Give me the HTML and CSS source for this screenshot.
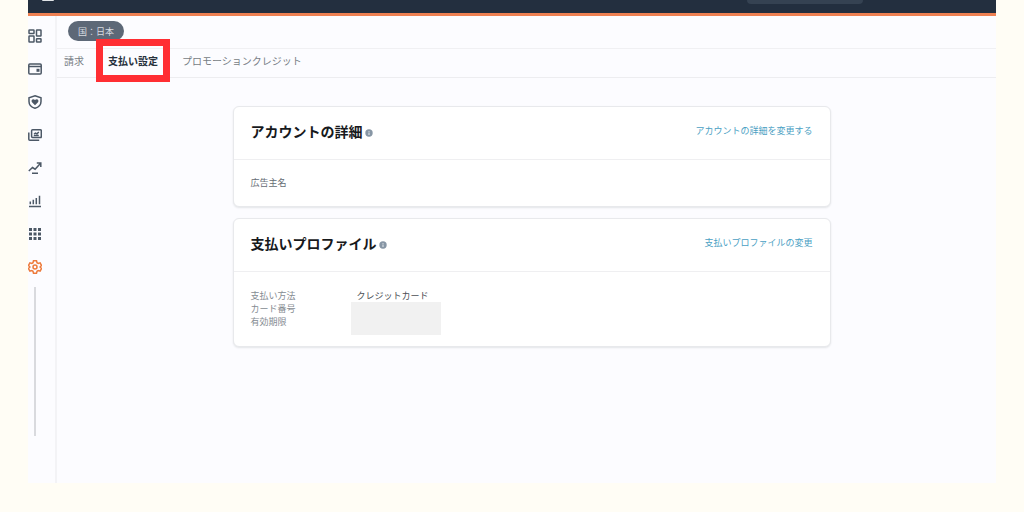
FILE: index.html
```html
<!DOCTYPE html>
<html lang="ja">
<head>
<meta charset="utf-8">
<meta name="viewport" content="width=device-width, initial-scale=1">
<title>支払い設定</title>
<link rel="stylesheet" href="styles.css">
</head>
<body>
<div class="app">
  <header class="topbar">
    <span class="logo"></span>
    <span class="search"></span>
  </header>
  <div class="workspace">
    <nav class="sidebar" aria-label="メニュー">
      <a class="nav-item" href="#" aria-label="ダッシュボード"><svg viewBox="0 0 14 14"><rect x="1" y="1" width="5" height="3.5" rx=".5"/><rect x="1" y="7" width="5" height="6" rx=".5"/><rect x="8.5" y="1" width="4.5" height="6" rx=".5"/><rect x="8.5" y="9.7" width="4.5" height="3.3" rx=".5"/></svg></a>
      <a class="nav-item" href="#" aria-label="支払い"><svg viewBox="0 0 14 14"><rect x=".8" y="2" width="12.4" height="10" rx="1"/><path d="M1 4.500h12"/><rect class="fill" x="8.5" y="6.800" width="3" height="3"/></svg></a>
      <a class="nav-item" href="#" aria-label="ブランド保護"><svg viewBox="0 0 14 14"><path d="M7 .8 13 2.700V6.400C13 10 10.400 12.200 7 13.300 3.600 12.200 1 10 1 6.400V2.700Z"/><path class="fill" d="M7 10.300 4 7.200C2.500 5.300 4.800 2.900 7 4.900 9.200 2.900 11.500 5.300 10 7.200Z"/></svg></a>
      <a class="nav-item" href="#" aria-label="クリエイティブ"><svg viewBox="0 0 14 14"><rect x="3.600" y="1.800" width="9.700" height="7.800" rx="1"/><path d="M.8 4.500v6.700q0 1 1 1h9.400M5.800 7.500h5M6 6l1.500-1 1.500.8 1.800-1.800"/></svg></a>
      <a class="nav-item" href="#" aria-label="トレンド"><svg viewBox="0 0 14 14"><path d="M.8 10 4.500 6.500l2.600 1.700 5.200-5.600M8.800 2h4v4M4 12.300h6"/></svg></a>
      <a class="nav-item" href="#" aria-label="レポート"><svg viewBox="0 0 14 14"><path d="M1 12.500h12M2.300 10.300V7.500M5.300 10.300V5.800M8.300 10.300V4M11.500 10.300V1.800"/></svg></a>
      <a class="nav-item" href="#" aria-label="アプリ"><svg viewBox="0 0 14 14"><path class="fill" d="M1 1h3v3H1ZM5.500 1h3v3h-3ZM10 1h3v3h-3ZM1 5.500h3v3H1ZM5.500 5.500h3v3h-3ZM10 5.500h3v3h-3ZM1 10h3v3H1ZM5.500 10h3v3h-3ZM10 10h3v3h-3Z"/></svg></a>
      <a class="nav-item nav-item-active" href="#" aria-label="設定"><svg viewBox="0 0 14 14"><path d="M5.500.8h3L9 2.700l1.200.7 1.900-.6 1.400 2.600L12.100 7l1.400 1.600-1.400 2.600-1.900-.6-1.200.7-.5 1.900h-3L5 11.300l-1.200-.7-1.900.6L.5 8.600 1.900 7 .5 5.400l1.400-2.600 1.900.6L5 2.700Z"/><circle cx="7" cy="7" r="2"/></svg></a>
      <span class="rail"></span>
    </nav>
    <main class="main">
      <div class="filters"><button class="country" type="button">国：日本</button></div>
      <nav class="tabs" aria-label="設定">
        <a class="tab" href="#">請求</a>
        <a class="tab tab-active" href="#" aria-current="page">支払い設定</a>
        <a class="tab" href="#">プロモーションクレジット</a>
      </nav>
      <div class="content">
        <section class="card">
          <div class="card-head">
            <h2>アカウントの詳細</h2>
            <svg class="info" viewBox="0 0 8 8"><circle cx="4" cy="4" r="3.700"/><path d="M4 3.500v2.500M4 2v.8"/></svg>
            <a class="action" href="#">アカウントの詳細を変更する</a>
          </div>
          <div class="card-body">広告主名</div>
        </section>
        <section class="card">
          <div class="card-head">
            <h2>支払いプロファイル</h2>
            <svg class="info" viewBox="0 0 8 8"><circle cx="4" cy="4" r="3.700"/><path d="M4 3.500v2.500M4 2v.8"/></svg>
            <a class="action" href="#">支払いプロファイルの変更</a>
          </div>
          <div class="card-body payment">
            <div class="labels"><div>支払い方法</div><div>カード番号</div><div>有効期限</div></div>
            <div class="values"><div class="method">クレジットカード</div><div class="masked"></div></div>
          </div>
        </section>
      </div>
    </main>
  </div>
</div>
</body>
</html>
```
FILE: styles.css
```css
* { box-sizing: border-box; }
body {
  margin: 0;
  min-height: 100vh;
  display: flex;
  padding: 0 28px 29px;
  background: #fffdf5;
  color: #666d75;
  font-family: "Noto Sans CJK JP", sans-serif;
  font-size: 9px;
  line-height: 13px;
}
a { color: inherit; text-decoration: none; }
.app { flex: 1; display: flex; flex-direction: column; background: #fcfcff; }
.topbar {
  height: 16px;
  display: flex;
  justify-content: space-between;
  align-items: flex-start;
  padding: 0 133px 0 14px;
  background: #232f3f;
  border-bottom: 3px solid #ee8052;
}
.logo { width: 12px; height: 1px; border-radius: 0 0 8px 8px; background: #dfe3e6; }
.search { width: 116px; height: 4px; border-radius: 0 0 8px 8px; background: #354252; }
.workspace { flex: 1; display: flex; }
.sidebar {
  width: 29px;
  display: flex;
  flex-direction: column;
  padding-top: 3px;
  border-right: 2px solid #f3f3f6;
}
.nav-item { width: 14px; height: 33px; display: flex; align-items: center; color: #4c5866; }
.nav-item svg { width: 14px; height: 14px; fill: none; stroke: currentColor; stroke-width: 1.5; }
.nav-item svg .fill { fill: currentColor; stroke: none; }
.nav-item-active { color: #ed7b3c; }
.rail { width: 2px; height: 149px; margin: 4px 0 0 6px; background: #d9dade; }
.main { flex: 1; min-width: 0; }
.filters { height: 33px; padding: 5px 11px; border-bottom: 1px solid #f0f0f3; }
.country {
  display: block;
  height: 20px;
  padding: 0 10px;
  border: 0;
  border-radius: 10px;
  background: #5d6877;
  color: #d8dce1;
  font: inherit;
}
.tabs {
  height: 29px;
  display: flex;
  gap: 24px;
  align-items: center;
  padding: 0 7px 5px;
  border-bottom: 1px solid #ededf0;
  color: #777d84;
  font-size: 10px;
}
.tab-active { position: relative; color: #27313c; font-weight: 700; }
.tab-active::after { content: ""; position: absolute; inset: -15px -12px; border: 7px solid #ff2e33; }
.content {
  display: flex;
  flex-direction: column;
  align-items: center;
  gap: 11px;
  padding: 28px 0 28px 10px;
}
.card {
  width: 100%;
  max-width: 598px;
  background: #fff;
  border: 1px solid #e8e9ec;
  border-radius: 6px;
  box-shadow: 0 1px 2px #e3e5e8;
}
.card-head {
  height: 53px;
  display: flex;
  align-items: center;
  gap: 2px;
  padding: 0 17px 4px;
  border-bottom: 1px solid #efeff1;
}
h2 { margin: 0; color: #17191c; font-size: 14px; line-height: 20px; }
.info { width: 8px; height: 8px; margin-top: 3px; fill: #8796a5; stroke: #e5eaee; stroke-width: 1; }
.info circle { stroke: none; }
.action { margin-left: auto; padding-bottom: 1px; color: #4aa0c3; }
.card-body { padding: 16px 17px 17px; }
.payment { display: flex; padding-top: 17px; padding-bottom: 11px; color: #858b92; }
.labels { width: 100px; }
.method { padding-left: 6px; color: #4c5055; }
.masked { width: 90px; height: 33px; background: #f1f1f1; }
```
